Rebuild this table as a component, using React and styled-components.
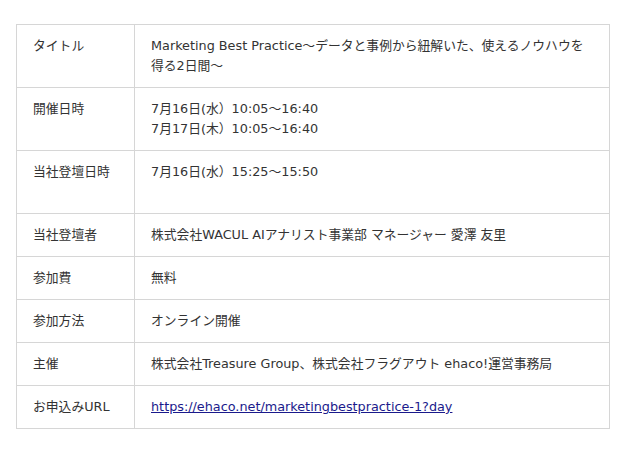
import React from "react";
import styled, { createGlobalStyle } from "styled-components";

const GlobalStyle = createGlobalStyle`
  body {
    margin: 0;
    background: #fff;
    font-family: "DejaVu Sans", "Noto Sans CJK JP", sans-serif;
    color: #333;
  }
`;

const Page = styled.div`
  padding: 24px 31px 24px 16px;
`;

const Table = styled.table`
  width: 594px;
  border-collapse: collapse;
  font-size: 12.8px;
  line-height: 20px;
`;

const HeadCell = styled.th`
  width: 85px;
  padding: 11px 16px;
  border: 1px solid #d6d6d6;
  text-align: left;
  vertical-align: top;
  font-weight: normal;
`;

const DataCell = styled.td`
  padding: 11px 16px;
  border: 1px solid #d6d6d6;
  vertical-align: top;
`;

const Link = styled.a`
  color: #1a1a8c;
  text-decoration: underline;
`;

const rows = [
  {
    label: "タイトル",
    value: "Marketing Best Practice～データと事例から紐解いた、使えるノウハウを得る2日間～",
  },
  {
    label: "開催日時",
    value: (
      <>
        7月16日(水）10:05～16:40
        <br />
        7月17日(木）10:05～16:40
      </>
    ),
  },
  {
    label: "当社登壇日時",
    value: (
      <>
        7月16日(水）15:25～15:50
        <br />
        <br />
      </>
    ),
  },
  {
    label: "当社登壇者",
    value: "株式会社WACUL AIアナリスト事業部 マネージャー 愛澤 友里",
  },
  { label: "参加費", value: "無料" },
  { label: "参加方法", value: "オンライン開催" },
  {
    label: "主催",
    value: "株式会社Treasure Group、株式会社フラグアウト ehaco!運営事務局",
  },
  {
    label: "お申込みURL",
    value: (
      <Link href="#">https://ehaco.net/marketingbestpractice-1?day</Link>
    ),
  },
];

const App = () => {
  return (
    <Page>
      <GlobalStyle />
      <Table>
        <tbody>
          {rows.map((row) => (
            <tr key={row.label}>
              <HeadCell>{row.label}</HeadCell>
              <DataCell>{row.value}</DataCell>
            </tr>
          ))}
        </tbody>
      </Table>
    </Page>
  );
};

export default App;
